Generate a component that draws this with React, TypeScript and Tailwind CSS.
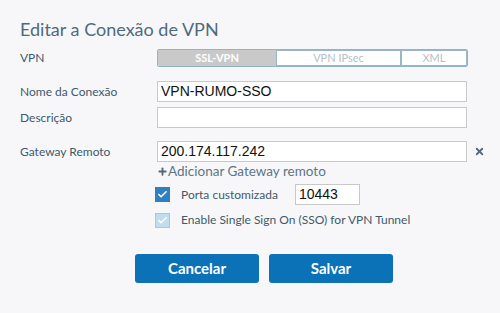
import { Check, X, Plus } from 'lucide-react';

const LABEL = 'text-[12px] text-[#3e5a6b]';
const INPUT =
  'h-[21px] border border-[#c9c9c9] bg-white px-[3px] text-[14px] text-[#111] font-["Liberation_Sans",Arial,sans-serif] outline-none';

function Row({ label, children, mt }: { label: string; children: React.ReactNode; mt: string }) {
  return (
    <div className={`flex items-center ${mt}`}>
      <div className={`w-[137px] ${LABEL}`}>{label}</div>
      {children}
    </div>
  );
}

export default function App() {
  return (
    <div className="w-[500px] h-[313px] bg-[#f7f7fa] font-['Lato',sans-serif] pl-[20px] pt-[17px]">
      <h1 className="text-[18px] leading-[24px] text-[#4f6b7b]">Editar a Conexão de VPN</h1>

      <Row label="VPN" mt="mt-[8px]">
        <div className="flex h-[18px] w-[311px] rounded-[2px] border border-[#8fb4cc] text-[11px] font-bold overflow-hidden">
          <div className="w-[118px] flex items-center justify-center bg-[#c9c9c9] text-white">SSL-VPN</div>
          <div className="w-[125px] flex items-center justify-center bg-white text-[#b5c0c6] font-normal border border-[#9bb6c7]">
            VPN IPsec
          </div>
          <div className="flex-1 flex items-center justify-center bg-white text-[#b5c0c6] font-normal border border-[#9bb6c7]">
            XML
          </div>
        </div>
      </Row>

      <Row label="Nome da Conexão" mt="mt-[14px]">
        <input className={`${INPUT} w-[310px]`} defaultValue="VPN-RUMO-SSO" />
      </Row>
      <Row label="Descrição" mt="mt-[5px]">
        <input className={`${INPUT} w-[310px]`} defaultValue="" />
      </Row>
      <Row label="Gateway Remoto" mt="mt-[13px]">
        <input className={`${INPUT} w-[310px]`} defaultValue="200.174.117.242" />
        <X size={11} strokeWidth={4} className="ml-[7px] text-[#4f6b7b]" />
      </Row>

      <div className="ml-[137px] mt-[1px] flex items-center text-[13.5px] leading-[16px] text-[#5c7686]">
        <Plus size={11} strokeWidth={4} className="text-[#4f6b7b]" />
        Adicionar Gateway remoto
      </div>

      <div className="ml-[135px] mt-[5px] flex items-center">
        <div className="w-[15px] h-[15px] bg-[#2f7fc1] flex items-center justify-center">
          <Check size={11} strokeWidth={3.5} className="text-white" />
        </div>
        <span className={`ml-[11px] ${LABEL}`}>Porta customizada</span>
        <input className={`${INPUT} ml-[17px] w-[65px] h-[21px]`} defaultValue="10443" />
      </div>

      <div className="ml-[135px] mt-[6px] flex items-center">
        <div className="w-[15px] h-[15px] bg-[#c2dcef] border border-[#a9c8df] flex items-center justify-center">
          <Check size={11} strokeWidth={3.5} className="text-white" />
        </div>
        <span className={`ml-[11px] ${LABEL}`}>Enable Single Sign On (SSO) for VPN Tunnel</span>
      </div>

      <div className="ml-[115px] mt-[25px] flex gap-[10px]">
        <button className="w-[124px] h-[29px] rounded-[3px] bg-[#0b72b8] text-white text-[15px] font-bold">
          Cancelar
        </button>
        <button className="w-[124px] h-[29px] rounded-[3px] bg-[#0b72b8] text-white text-[15px] font-bold">
          Salvar
        </button>
      </div>
    </div>
  );
}
